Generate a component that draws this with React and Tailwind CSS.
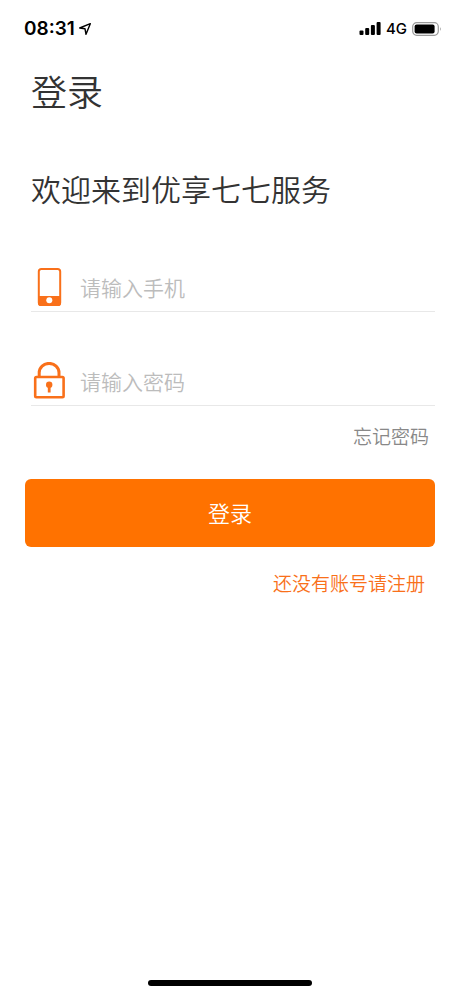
const cjk = "font-['Noto_Sans_CJK_SC',sans-serif]";

function StatusBar() {
  return (
    <header className="flex h-[58px] items-center justify-between pl-6 pr-[18px] font-['Inter',sans-serif] text-black">
      <div className="flex items-center gap-1">
        <span className="text-[19px] font-semibold">08:31</span>
        <svg className="size-3" viewBox="0 0 12 12" fill="none" stroke="currentColor" strokeWidth="1.4" strokeLinejoin="round" aria-hidden="true">
          <path d="M11.3 0.7 L0.7 5 L6 5.8 L7 11.3 Z" />
        </svg>
      </div>
      <div className="flex items-center gap-[5px]">
        <svg className="h-[14px] w-[22px]" viewBox="0 0 22 14" fill="currentColor" aria-hidden="true">
          <rect x="0.5" y="8.5" width="4" height="4.5" rx="1" />
          <rect x="6.2" y="6" width="4" height="7" rx="1" />
          <rect x="11.9" y="3" width="4" height="10" rx="1" />
          <rect x="17.6" y="0" width="4" height="13" rx="1" />
        </svg>
        <span className="text-[15px] font-medium">4G</span>
        <svg className="h-[14px] w-[30px]" viewBox="0 0 30 14" aria-hidden="true">
          <rect x="0.7" y="0.7" width="25.6" height="12.6" rx="4" fill="none" stroke="#9a9a9a" strokeWidth="1.2" />
          <rect x="2.6" y="2.4" width="20" height="9" rx="2" fill="#000" />
          <path d="M28 5 Q29.8 7 28 9 Z" fill="#9a9a9a" />
        </svg>
      </div>
    </header>
  );
}

function PhoneIcon() {
  return (
    <svg className="h-[38px] w-9 shrink-0" viewBox="0 0 36 38" aria-hidden="true">
      <rect x="7.8" y="1" width="21.4" height="36" rx="2.6" fill="#fff" stroke="#f9701a" strokeWidth="2" />
      <path d="M7 28 H30 V35 Q30 38 27 38 H10 Q7 38 7 35 Z" fill="#f9701a" />
      <circle cx="18.3" cy="32.2" r="3" fill="#fff" />
    </svg>
  );
}

function LockIcon() {
  return (
    <svg className="h-[38px] w-9 shrink-0" viewBox="0 0 36 38" fill="none" stroke="#f9701a" aria-hidden="true">
      <path d="M8.2 15 V10.8 A9.9 9.4 0 0 1 28 10.8 V15" strokeWidth="3" />
      <rect x="4.2" y="15" width="28.4" height="20.2" rx="1.2" strokeWidth="2.6" />
      <circle cx="18.2" cy="22.8" r="3.2" fill="#f9701a" stroke="none" />
      <path d="M18.2 24 V30.5" strokeWidth="2.8" />
    </svg>
  );
}

function Field({ id, label, type, icon }) {
  return (
    <div className="ml-[6px] flex h-[50px] items-center border-b border-[#e8e8e8]">
      <label htmlFor={id} aria-label={label}>{icon}</label>
      <input
        id={id}
        type={type}
        placeholder={label}
        className="ml-[13px] h-10 min-w-0 flex-1 bg-transparent text-[21px] text-[#333] outline-none placeholder:text-[#bcbcbc]"
      />
    </div>
  );
}

export default function App() {
  return (
    <div className={`${cjk} flex min-h-screen flex-col bg-white font-[350] text-[#333]`}>
      <StatusBar />
      <main className="px-[25px]">
        <h1 className="ml-[6px] mt-1 text-4xl font-[350] leading-[56px]">登录</h1>
        <h2 className="ml-[6px] mt-[50px] text-3xl font-[350] leading-[40px]">欢迎来到优享七七服务</h2>
        <form onSubmit={(e) => e.preventDefault()}>
          <div className="mt-[54px] flex flex-col gap-11">
            <Field id="phone" type="tel" label="请输入手机" icon={<PhoneIcon />} />
            <Field id="password" type="password" label="请输入密码" icon={<LockIcon />} />
          </div>
          <div className="mt-[15px] flex justify-end pr-[6px]">
            <a href="#forgot" className="text-[19px] leading-[30px] text-[#888]">忘记密码</a>
          </div>
          <button type="submit" className="mt-7 h-[68px] w-full rounded-md bg-[#ff7200] pb-[2px] text-[22px] text-white">
            登录
          </button>
          <div className="mt-[21px] flex justify-end pr-[10px]">
            <a href="#register" className="text-[19px] leading-[30px] text-[#f9701a]">还没有账号请注册</a>
          </div>
        </form>
      </main>
      <footer className="mt-auto flex justify-center pb-[10px]">
        <div className="h-[6px] w-[164px] rounded-full bg-black" />
      </footer>
    </div>
  );
}
